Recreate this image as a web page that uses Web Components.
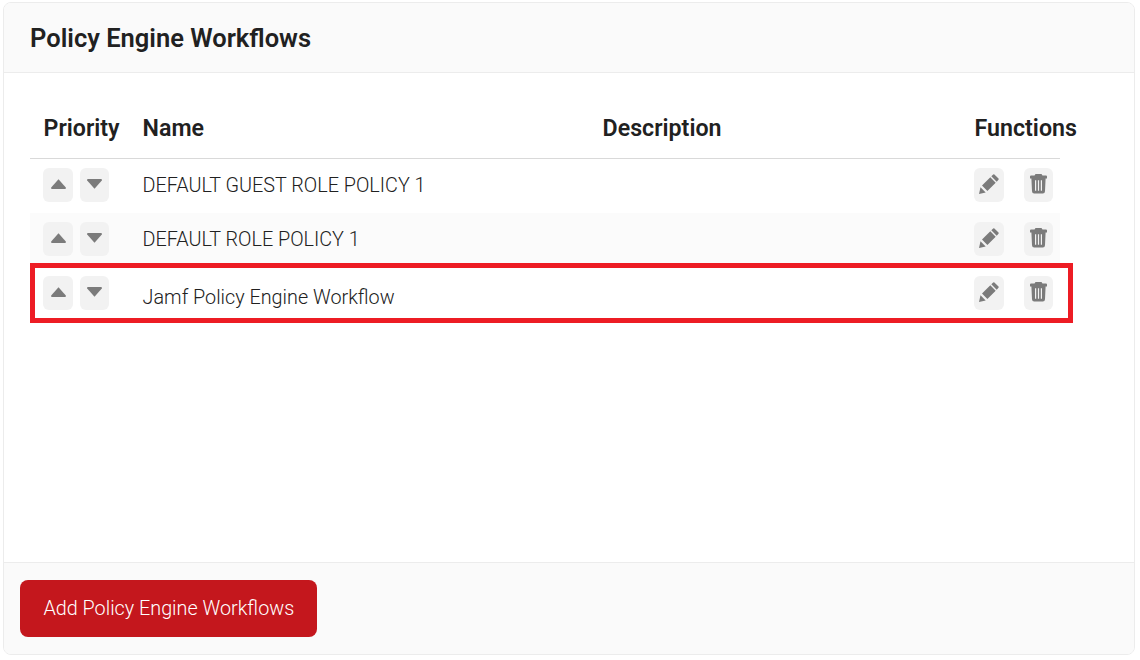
<!DOCTYPE html>
<html>
<head>
<meta charset="utf-8">
<title>Policy Engine Workflows</title>
<style>
    html, body { margin: 0; background: #fff; }
    body { font-family: Roboto, "Liberation Sans", sans-serif; padding: 2px 5px 5px 3px; }
</style>
</head>
<body>
<policy-card heading="Policy Engine Workflows">
    <policy-table>
        <policy-row name="DEFAULT GUEST ROLE POLICY 1"></policy-row>
        <policy-row name="DEFAULT ROLE POLICY 1" striped></policy-row>
        <policy-row name="Jamf Policy Engine Workflow" lowered></policy-row>
    </policy-table>
    <add-button slot="footer">Add Policy Engine Workflows</add-button>
</policy-card>

<script>
const ICONS = {
    up: '<svg width="15" height="10" viewBox="0 0 15 10"><path d="M7.5 0.2L14.8 8.6Q15.2 10 14 10H1Q-0.2 10 0.2 8.6Z" fill="#7b7b7b"/></svg>',
    down: '<svg width="15" height="10" viewBox="0 0 15 10"><path d="M7.5 9.8L14.8 1.4Q15.2 0 14 0H1Q-0.2 0 0.2 1.4Z" fill="#7b7b7b"/></svg>',
    edit: '<svg width="20" height="20" viewBox="0 0 20 20"><path d="M0 20L1.5 13.3L6.7 18.5Z M3 11.6L11.3 3.3L16.7 8.7L8.4 17Z M12.3 2.3L14.2 0.5Q14.8 0 15.4 0.5L19.5 4.6Q20 5.2 19.5 5.8L17.7 7.7Z" fill="#7b7b7b"/></svg>',
    trash: '<svg width="17" height="20" viewBox="0 0 17 20"><path fill-rule="evenodd" d="M5.5 0H11.5L12.5 1.4H16Q17 1.4 17 2.4V4.4H15.6L15 17.2Q14.9 19.4 12.8 19.4H4.2Q2.1 19.4 2 17.2L1.4 4.4H0V2.4Q0 1.4 1 1.4H4.5Z M5 6.2V16.8H6.2V6.2Z M7.9 6.2V16.8H9.1V6.2Z M10.8 6.2V16.8H12V6.2Z" fill="#7b7b7b"/></svg>'
};

class PolicyCard extends HTMLElement {
    constructor() {
        super();
        this.attachShadow({ mode: 'open' });
    }

    connectedCallback() {
        this.shadowRoot.innerHTML = `
            <style>
                :host {
                    display: flex;
                    flex-direction: column;
                    box-sizing: border-box;
                    height: 653px;
                    border: 1px solid #ececec;
                    border-radius: 8px;
                    color: #212121;
                    background: #fff;
                }
                header {
                    background: #fafafa;
                    border-bottom: 1px solid #ececec;
                    border-radius: 7px 7px 0 0;
                    height: 69px;
                    padding-left: 26px;
                    display: flex;
                    align-items: center;
                    font-size: 25.5px;
                    font-weight: 600;
                    flex: none;
                }
                main {
                    flex: 1;
                    padding: 0 74px 0 26px;
                }
                footer {
                    flex: none;
                    box-sizing: border-box;
                    height: 92px;
                    background: #fafafa;
                    border-top: 1px solid #ececec;
                    border-radius: 0 0 7px 7px;
                    padding: 17px 16px;
                }
            </style>
            <header>${this.getAttribute('heading')}</header>
            <main><slot></slot></main>
            <footer><slot name="footer"></slot></footer>
        `;
    }
}

class PolicyTable extends HTMLElement {
    constructor() {
        super();
        this.attachShadow({ mode: 'open' });
    }

    connectedCallback() {
        this.shadowRoot.innerHTML = `
            <style>
                :host {
                    display: block;
                    position: relative;
                    padding-top: 28px;
                }
                .head {
                    display: grid;
                    grid-template-columns: 112.6px 460px 372px auto;
                    height: 58px;
                    box-sizing: border-box;
                    padding-bottom: 3px;
                    align-items: center;
                    border-bottom: 1px solid #d9d9d9;
                    font-size: 23.2px;
                    font-weight: 600;
                    white-space: nowrap;
                }
                .head span:first-child { padding-left: 13.6px; }
                .head span:last-child { width: 85px; }
                .highlight {
                    position: absolute;
                    left: 0;
                    right: -13px;
                    top: 190px;
                    height: 60px;
                    box-sizing: border-box;
                    border: 5px solid #ed1c24;
                    pointer-events: none;
                }
            </style>
            <div class="head">
                <span>Priority</span>
                <span>Name</span>
                <span>Description</span>
                <span>Functions</span>
            </div>
            <slot></slot>
            <div class="highlight"></div>
        `;
    }
}

class PolicyRow extends HTMLElement {
    constructor() {
        super();
        this.attachShadow({ mode: 'open' });
    }

    connectedCallback() {
        this.shadowRoot.innerHTML = `
            <style>
                :host {
                    display: grid;
                    grid-template-columns: 112.6px 1fr auto;
                    box-sizing: border-box;
                    height: 54px;
                    padding-top: 9px;
                    font-size: 19.8px;
                    font-weight: 300;
                    color: #212121;
                }
                :host([striped]) { background: #fbfbfb; }
                .priority { display: flex; gap: 7px; padding-left: 13px; }
                .name { height: 34px; line-height: 36px; white-space: nowrap; }
                :host([lowered]) .name { padding-top: 4px; }
                .functions { display: flex; gap: 20px; padding-right: 7px; }
            </style>
            <div class="priority">
                <icon-button icon="up" width="30"></icon-button>
                <icon-button icon="down" width="29"></icon-button>
            </div>
            <div class="name">${this.getAttribute('name')}</div>
            <div class="functions">
                <icon-button icon="edit" width="30"></icon-button>
                <icon-button icon="trash" width="29"></icon-button>
            </div>
        `;
    }
}

class IconButton extends HTMLElement {
    constructor() {
        super();
        this.attachShadow({ mode: 'open' });
    }

    connectedCallback() {
        this.shadowRoot.innerHTML = `
            <style>
                :host {
                    display: flex;
                    align-items: center;
                    justify-content: center;
                    width: ${this.getAttribute('width')}px;
                    height: 34px;
                    padding-bottom: 2px;
                    box-sizing: border-box;
                    background: #f2f2f2;
                    border-radius: 6px;
                    cursor: pointer;
                }
                svg { display: block; }
            </style>
            ${ICONS[this.getAttribute('icon')]}
        `;
    }
}

class AddButton extends HTMLElement {
    constructor() {
        super();
        this.attachShadow({ mode: 'open' });
    }

    connectedCallback() {
        this.shadowRoot.innerHTML = `
            <style>
                :host {
                    display: inline-flex;
                    align-items: center;
                    height: 57px;
                    padding: 0 22.6px 0 23.4px;
                    background: #c4171d;
                    border-radius: 8px;
                    color: #fff;
                    font-size: 19.8px;
                    font-weight: 300;
                    cursor: pointer;
                }
            </style>
            <slot></slot>
        `;
    }
}

customElements.define('policy-card', PolicyCard);
customElements.define('policy-table', PolicyTable);
customElements.define('policy-row', PolicyRow);
customElements.define('icon-button', IconButton);
customElements.define('add-button', AddButton);
</script>
</body>
</html>
